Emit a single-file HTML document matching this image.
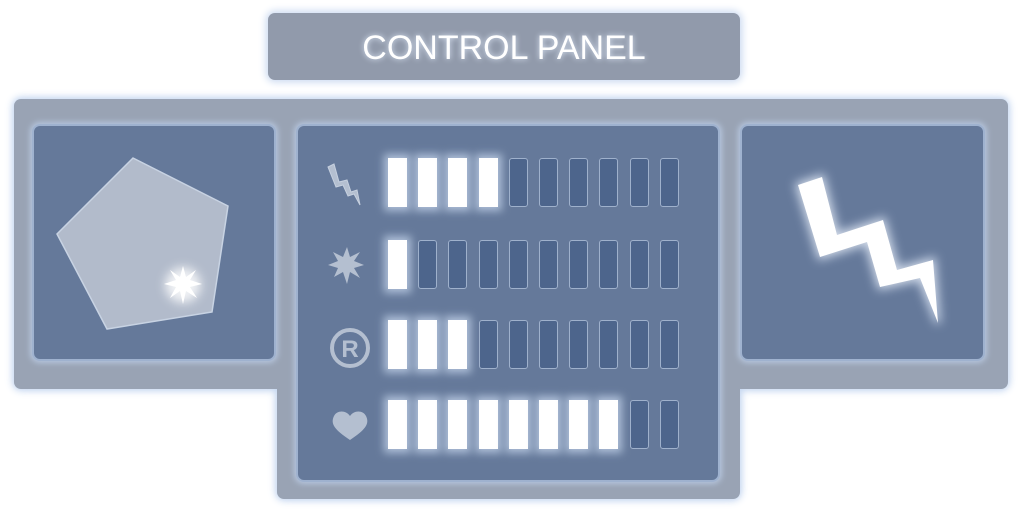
<!DOCTYPE html>
<html><head><style>
body{margin:0;width:1024px;height:512px;background:#fff;position:relative;overflow:hidden;font-family:"Liberation Sans",sans-serif}
.a{position:absolute;box-sizing:border-box}
.title{left:268px;top:13px;width:472px;height:67px;background:#919aab;border-radius:7px;box-shadow:0 0 8px 2px #c9d8f0;color:#fff;font-size:34px;text-align:center;line-height:70px;text-shadow:0 0 6px #dfe9f8}
.wrap{position:absolute;left:0;top:0;width:1024px;height:512px;filter:drop-shadow(0 0 4px #c3d5f0) drop-shadow(0 0 3px #d5e2f5)}
.fr{background:#99a3b4}
.pn{background:#65799a;border:2px solid #9fb2cf;border-radius:8px;box-shadow:0 0 6px 2px #b6c6de}
.b{position:absolute;width:19px;height:49px;box-sizing:border-box}
.on{background:#fff;box-shadow:0 0 8px 4px #aebfd8}
.off{background:#4d658c;border:1.5px solid #9fb1cc;border-radius:3px}
</style></head><body>
<div class="a title">CONTROL PANEL</div>
<div class="wrap">
<div class="a fr" style="left:14px;top:99px;width:994px;height:290px;border-radius:7px"></div>
<div class="a fr" style="left:277px;top:380px;width:463px;height:119px;border-radius:0 0 7px 7px"></div>
</div>
<div class="a pn" style="left:32px;top:124px;width:244px;height:237px"></div>
<div class="a pn" style="left:296px;top:124px;width:424px;height:358px"></div>
<div class="a pn" style="left:740px;top:124px;width:245px;height:237px"></div>
<svg class="a" style="left:0;top:0" width="1024" height="512">
<defs><filter id="g" x="-50%" y="-50%" width="200%" height="200%"><feGaussianBlur stdDeviation="5"/></filter></defs>
<polygon points="133,158 228,206 212,312 107,329 57,234" fill="#b2bbcb" stroke="#c8d3e3" stroke-width="1.5"/>
<circle cx="183" cy="285" r="18" fill="#fff" filter="url(#g)" opacity=".8"/>
<polygon points="183,266 186,277 196,270 190,280 202,284 190,287 197,298 186,291 183,304 180,291 170,298 176,287 164,284 176,280 170,270 180,277" fill="#fff"/>
<polygon points="798,185 822,177 837,235 883,220 897,270 933,260 938,323 920,278 880,287 867,242 820,257" fill="#fff" stroke="#dbe6f7" stroke-width="6" filter="url(#g)" opacity=".8"/>
<polygon points="798,185 822,177 837,235 883,220 897,270 933,260 938,323 920,278 880,287 867,242 820,257" fill="#fff"/>
<g fill="#b4bfd0" stroke="#c6d0df">
<polygon points="328,167 334,164 339,182 347,180 351,192 357,190 360,205 354,194 348,196 343,185 336,187" stroke-width="1"/>
<polygon points="347,247 350,257 360,252 354,261 364,265 354,268 360,278 350,272 347,284 343,272 334,277 338,268 328,265 338,261 333,252 343,257" stroke="none"/>
<path d="M350,440 C335,430 330,424 334,416 C337,410 346,410 350,416 C354,410 363,410 366,416 C370,424 365,430 350,440Z" stroke="none"/>
</g>
<circle cx="350" cy="348" r="18" fill="none" stroke="#b4bfd0" stroke-width="4"/>
<text x="350" y="357" font-family="Liberation Sans" font-weight="bold" font-size="24" fill="#b4bfd0" text-anchor="middle">R</text>
</svg>
<div id="bars"></div>
<script>
var rows=[[158,4],[240,1],[320,3],[400,8]],h='';
rows.forEach(function(r){for(var i=0;i<10;i++){h+='<div class="b '+(i<r[1]?'on':'off')+'" style="left:'+(388+i*30.2)+'px;top:'+r[0]+'px"></div>';}});
document.getElementById('bars').innerHTML=h;
</script>
</body></html>
